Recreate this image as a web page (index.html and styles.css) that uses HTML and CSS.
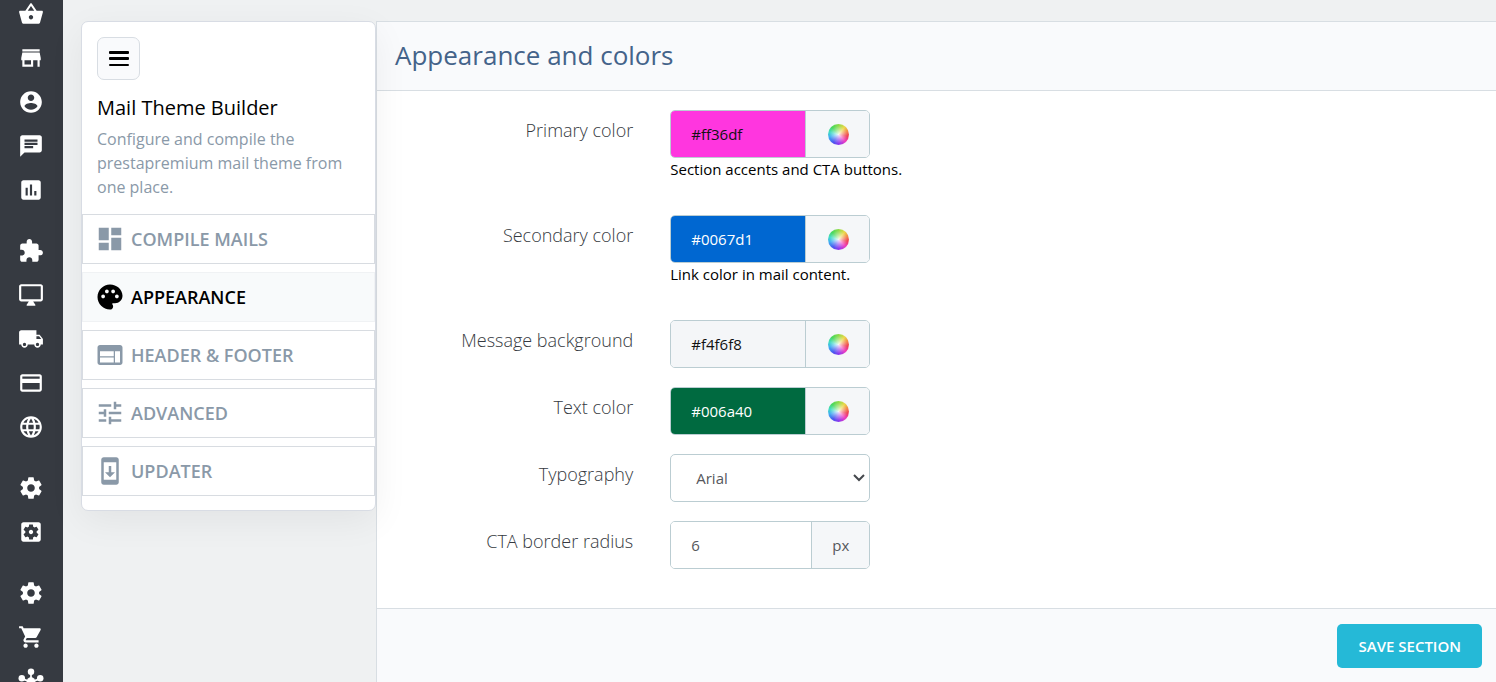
FILE: index.html
```html
<!DOCTYPE html>
<html lang="en">
<head>
<meta charset="utf-8">
<meta name="viewport" content="width=device-width, initial-scale=1">
<title>Mail Theme Builder</title>
<link rel="stylesheet" href="styles.css">
</head>
<body>
<div class="app">
  <nav class="rail" aria-label="Main">
    <div class="rail-group">
      <a href="#orders" aria-label="Orders"><svg class="rail-icon" viewBox="0 0 24 24"><path d="M17.21 9l-4.38-6.56c-.19-.28-.51-.42-.83-.42-.32 0-.64.14-.83.43L6.79 9H2c-.55 0-1 .45-1 1 0 .09.01.18.04.27l2.54 9.27c.23.84 1 1.46 1.92 1.46h13c.92 0 1.69-.62 1.93-1.46l2.54-9.27L23 10c0-.55-.45-1-1-1h-4.79zM9 9l3-4.4L15 9H9zm3 8c-1.1 0-2-.9-2-2s.9-2 2-2 2 .9 2 2-.9 2-2 2z"/></svg></a>
      <a href="#catalog" aria-label="Catalog"><svg class="rail-icon" viewBox="0 0 24 24"><path d="M20 4H4v2h16V4zm1 10v-2l-1-5H4l-1 5v2h1v6h10v-6h4v6h2v-6h1zm-9 4H6v-4h6v4z"/></svg></a>
      <a href="#customers" aria-label="Customers"><svg class="rail-icon" viewBox="0 0 24 24"><path d="M12 2C6.48 2 2 6.48 2 12s4.48 10 10 10 10-4.48 10-10S17.52 2 12 2zm0 3c1.66 0 3 1.34 3 3s-1.34 3-3 3-3-1.34-3-3 1.34-3 3-3zm0 14.200c-2.500 0-4.710-1.280-6-3.220.03-1.990 4-3.080 6-3.080 1.990 0 5.970 1.090 6 3.080-1.290 1.940-3.500 3.220-6 3.220z"/></svg></a>
      <a href="#service" aria-label="Customer service"><svg class="rail-icon" viewBox="0 0 24 24"><path d="M20 2H4c-1.1 0-1.990.9-1.990 2L2 22l4-4h14c1.1 0 2-.9 2-2V4c0-1.1-.9-2-2-2zM6 9h12v2H6V9zm8 5H6v-2h8v2zm4-6H6V6h12v2z"/></svg></a>
      <a href="#stats" aria-label="Stats"><svg class="rail-icon" viewBox="0 0 24 24"><path d="M19 3H5c-1.1 0-2 .9-2 2v14c0 1.1.9 2 2 2h14c1.1 0 2-.9 2-2V5c0-1.1-.9-2-2-2zM9 17H7v-7h2v7zm4 0h-2V7h2v10zm4 0h-2v-4h2v4z"/></svg></a>
    </div>
    <div class="rail-group">
      <a href="#modules" aria-label="Modules"><svg class="rail-icon" viewBox="0 0 24 24"><path d="M20.500 11H19V7c0-1.1-.9-2-2-2h-4V3.500C13 2.120 11.880 1 10.500 1S8 2.120 8 3.500V5H4c-1.1 0-1.990.9-1.990 2v3.800H3.500c1.490 0 2.700 1.210 2.700 2.700s-1.210 2.700-2.700 2.700H2V20c0 1.1.9 2 2 2h3.800v-1.500c0-1.490 1.210-2.700 2.700-2.700 1.490 0 2.700 1.210 2.700 2.700V22H17c1.1 0 2-.9 2-2v-4h1.500c1.380 0 2.500-1.120 2.500-2.500S21.880 11 20.500 11z"/></svg></a>
      <a href="#design" aria-label="Design"><svg class="rail-icon" viewBox="0 0 24 24"><path d="M21 2H3c-1.1 0-2 .9-2 2v12c0 1.1.9 2 2 2h7l-2 3v1h8v-1l-2-3h7c1.1 0 2-.9 2-2V4c0-1.1-.9-2-2-2zm0 14H3V4h18v12z"/></svg></a>
      <a href="#shipping" aria-label="Shipping"><svg class="rail-icon" viewBox="0 0 24 24"><path d="M20 8h-3V4H3c-1.1 0-2 .9-2 2v11h2c0 1.660 1.340 3 3 3s3-1.340 3-3h6c0 1.660 1.340 3 3 3s3-1.340 3-3h2v-5l-3-4zM6 18.500c-.83 0-1.500-.67-1.500-1.500s.67-1.500 1.500-1.500 1.500.67 1.500 1.500-.67 1.500-1.500 1.500zm13.500-9l1.960 2.500H17V9.500h2.500zm-1.500 9c-.83 0-1.500-.67-1.500-1.500s.67-1.500 1.500-1.500 1.500.67 1.500 1.500-.67 1.500-1.500 1.500z"/></svg></a>
      <a href="#payment" aria-label="Payment"><svg class="rail-icon" viewBox="0 0 24 24"><path d="M20 4H4c-1.110 0-1.990.89-1.990 2L2 18c0 1.110.89 2 2 2h16c1.110 0 2-.89 2-2V6c0-1.110-.89-2-2-2zm0 14H4v-6h16v6zm0-10H4V6h16v2z"/></svg></a>
      <a href="#international" aria-label="International"><svg class="rail-icon" viewBox="0 0 24 24"><path d="M11.990 2C6.470 2 2 6.480 2 12s4.470 10 9.990 10C17.520 22 22 17.520 22 12S17.520 2 11.990 2zm6.930 6h-2.950c-.32-1.250-.78-2.450-1.380-3.560 1.840.63 3.370 1.910 4.330 3.560zM12 4.040c.83 1.200 1.480 2.530 1.910 3.960h-3.820c.43-1.430 1.080-2.760 1.910-3.960zM4.260 14C4.100 13.360 4 12.690 4 12s.1-1.360.26-2h3.380c-.08.66-.14 1.320-.14 2 0 .68.06 1.340.14 2H4.260zm.82 2h2.950c.32 1.250.78 2.450 1.380 3.560-1.840-.63-3.370-1.900-4.330-3.560zm2.950-8H5.080c.96-1.660 2.490-2.930 4.330-3.560C8.810 5.550 8.350 6.750 8.030 8zM12 19.960c-.83-1.200-1.480-2.530-1.910-3.960h3.820c-.43 1.430-1.080 2.760-1.910 3.960zM14.340 14H9.660c-.09-.66-.16-1.320-.16-2 0-.68.07-1.350.16-2h4.680c.09.65.16 1.320.16 2 0 .68-.07 1.340-.16 2zm.25 5.560c.6-1.110 1.060-2.310 1.380-3.560h2.950c-.96 1.650-2.490 2.930-4.330 3.560zM16.360 14c.08-.66.14-1.320.14-2 0-.68-.06-1.340-.14-2h3.380c.16.64.26 1.310.26 2s-.1 1.360-.26 2h-3.380z"/></svg></a>
    </div>
    <div class="rail-group">
      <a href="#parameters" aria-label="Shop parameters"><svg class="rail-icon" viewBox="0 0 24 24"><path id="gear" d="M19.430 12.980c.04-.32.07-.64.07-.98s-.03-.66-.07-.98l2.110-1.650c.19-.15.24-.42.12-.64l-2-3.460c-.12-.22-.39-.3-.61-.22l-2.490 1c-.52-.4-1.080-.73-1.690-.98l-.38-2.650C14.460 2.180 14.250 2 14 2h-4c-.25 0-.46.18-.49.42l-.38 2.650c-.61.25-1.170.59-1.690.98l-2.490-1c-.23-.09-.49 0-.61.22l-2 3.460c-.13.22-.07.49.12.64l2.110 1.650c-.04.32-.07.65-.07.98s.03.66.07.98l-2.110 1.650c-.19.15-.24.42-.12.64l2 3.460c.12.22.39.3.61.22l2.490-1c.52.4 1.080.73 1.690.98l.38 2.650c.03.24.24.42.49.42h4c.25 0 .46-.18.49-.42l.38-2.650c.61-.25 1.170-.59 1.690-.98l2.490 1c.23.09.49 0 .61-.22l2-3.460c.12-.22.07-.49-.12-.64l-2.110-1.650zM12 15.500c-1.930 0-3.500-1.570-3.500-3.500s1.570-3.500 3.500-3.500 3.500 1.570 3.500 3.500-1.570 3.500-3.500 3.500z"/></svg></a>
      <a href="#advanced-parameters" aria-label="Advanced parameters"><svg class="rail-icon" viewBox="0 0 24 24"><path d="M12 10c-1.1 0-2 .9-2 2s.9 2 2 2 2-.9 2-2-.9-2-2-2zm7-7H5c-1.110 0-2 .9-2 2v14c0 1.1.89 2 2 2h14c1.110 0 2-.9 2-2V5c0-1.1-.89-2-2-2zm-1.750 9c0 .23-.02.46-.05.68l1.480 1.160c.13.11.17.3.08.45l-1.400 2.420c-.09.15-.27.21-.43.15l-1.740-.7c-.36.28-.76.51-1.180.69l-.26 1.850c-.03.17-.18.3-.35.3h-2.800c-.17 0-.32-.13-.35-.29l-.26-1.850c-.43-.18-.82-.41-1.180-.69l-1.740.7c-.16.06-.34 0-.43-.15l-1.400-2.420c-.09-.15-.05-.34.08-.45l1.480-1.160c-.03-.23-.05-.46-.05-.69s.02-.46.05-.68l-1.480-1.160c-.13-.11-.17-.3-.08-.45l1.400-2.420c.09-.15.27-.21.43-.15l1.740.7c.36-.28.76-.51 1.180-.69l.26-1.850c.03-.17.18-.3.35-.3h2.800c.17 0 .32.13.35.29l.26 1.850c.43.18.82.41 1.180.69l1.740-.7c.16-.06.34 0 .43.15l1.400 2.420c.09.15.05.34-.08.45l-1.480 1.160c.03.23.05.46.05.69z"/></svg></a>
    </div>
    <div class="rail-group">
      <a href="#settings" aria-label="Settings"><svg class="rail-icon" viewBox="0 0 24 24"><use href="#gear"/></svg></a>
      <a href="#cart" aria-label="Cart"><svg class="rail-icon" viewBox="0 0 24 24"><path d="M7 18c-1.1 0-1.990.9-1.990 2S5.900 22 7 22s2-.9 2-2-.9-2-2-2zM1 2v2h2l3.600 7.590-1.350 2.450c-.16.28-.25.61-.25.96 0 1.1.9 2 2 2h12v-2H7.420c-.14 0-.25-.11-.25-.25l.03-.12.9-1.630h7.450c.75 0 1.410-.41 1.750-1.030l3.580-6.490c.08-.14.12-.31.12-.48 0-.55-.45-1-1-1H5.210l-.94-2H1zm16 16c-1.1 0-1.990.9-1.990 2s.89 2 1.990 2 2-.9 2-2-.9-2-2-2z"/></svg></a>
      <a href="#hub" aria-label="Hub"><svg class="rail-icon" viewBox="0 0 24 24"><circle cx="12" cy="3.500" r="3"/><circle cx="3.500" cy="9.500" r="3"/><circle cx="20.500" cy="9.500" r="3"/><circle cx="12" cy="12.500" r="4"/><circle cx="7" cy="20.500" r="3"/><circle cx="17" cy="20.500" r="3"/><path d="M11.200 5h1.600v5h-1.600zM3.500 9l6 2-.6 1.600-6-2zM20.500 9l-6 2 .6 1.600 6-2zM7 20l3-5 1.400.8-3 5zM17 20l-3-5-1.400.8 3 5z"/></svg></a>
    </div>
  </nav>

  <main class="workspace">
    <aside class="card">
      <div class="card-head">
        <button class="menu-button" type="button" aria-label="Toggle menu"><svg class="menu-icon" viewBox="0 0 20 16"><rect y="0" width="20" height="3" rx="1"/><rect y="6" width="20" height="3" rx="1"/><rect y="13" width="20" height="2" rx="1"/></svg></button>
        <h1 class="card-title">Mail Theme Builder</h1>
        <p class="card-text">Configure and compile the prestapremium mail theme from one place.</p>
      </div>
      <nav class="tabs" aria-label="Sections">
        <a class="tab" href="#compile"><svg class="tab-icon" viewBox="0 0 24 24"><path d="M3 13h8V3H3v10zm0 8h8v-6H3v6zm10 0h8V11h-8v10zm0-18v6h8V3h-8z"/></svg>COMPILE MAILS</a>
        <a class="tab tab-active" href="#appearance" aria-current="page"><svg class="tab-icon" viewBox="0 0 24 24"><path d="M12 2C6.490 2 2 6.490 2 12s4.490 10 10 10c1.380 0 2.500-1.120 2.500-2.500 0-.61-.23-1.200-.64-1.670-.08-.1-.13-.21-.13-.33 0-.28.22-.5.5-.5H16c3.310 0 6-2.690 6-6 0-4.960-4.490-9-10-9zm5.500 11c-.83 0-1.500-.67-1.500-1.500s.67-1.500 1.500-1.500 1.500.67 1.500 1.500-.67 1.500-1.500 1.500zm-3-4c-.83 0-1.500-.67-1.500-1.500S13.670 6 14.500 6s1.500.67 1.500 1.500S15.330 9 14.500 9zM5 11.500c0-.83.67-1.500 1.500-1.500s1.500.67 1.500 1.500S7.330 13 6.500 13 5 12.330 5 11.500zm6-4c0 .83-.67 1.500-1.500 1.500S8 8.330 8 7.500 8.670 6 9.500 6s1.500.67 1.500 1.500z"/></svg>APPEARANCE</a>
        <a class="tab" href="#header-footer"><svg class="tab-icon" viewBox="0 0 24 24"><path d="M20 4H4c-1.1 0-1.990.9-1.990 2L2 18c0 1.1.9 2 2 2h16c1.1 0 2-.9 2-2V6c0-1.1-.9-2-2-2zm-5 14H4v-4h11v4zm0-5H4V9h11v4zm5 5h-4V9h4v9z"/></svg>HEADER &amp; FOOTER</a>
        <a class="tab" href="#advanced"><svg class="tab-icon" viewBox="0 0 24 24"><path d="M3 17v2h6v-2H3zM3 5v2h10V5H3zm10 16v-2h8v-2h-8v-2h-2v6h2zM7 9v2H3v2h4v2h2V9H7zm14 4v-2H11v2h10zm-6-4h2V7h4V5h-4V3h-2v6z"/></svg>ADVANCED</a>
        <a class="tab" href="#updater"><svg class="tab-icon" viewBox="0 0 24 24"><path d="M17 1.010L7 1c-1.1 0-2 .9-2 2v18c0 1.1.9 2 2 2h10c1.1 0 2-.9 2-2V3c0-1.1-.9-1.990-2-1.990zM17 19H7V5h10v14zm-1-6h-3V8h-2v5H8l4 4 4-4z"/></svg>UPDATER</a>
      </nav>
    </aside>

    <form class="panel" id="appearance">
      <header class="panel-head"><h2 class="panel-title">Appearance and colors</h2></header>
      <div class="fields">
        <div class="field">
          <label class="label" for="primary">Primary color</label>
          <div>
            <div class="group">
              <input class="input swatch-primary" id="primary" type="text" value="#ff36df">
              <button class="picker" type="button" aria-label="Pick primary color"><span class="wheel"></span></button>
            </div>
            <p class="help">Section accents and CTA buttons.</p>
          </div>
        </div>
        <div class="field">
          <label class="label" for="secondary">Secondary color</label>
          <div>
            <div class="group">
              <input class="input swatch-secondary" id="secondary" type="text" value="#0067d1">
              <button class="picker" type="button" aria-label="Pick secondary color"><span class="wheel"></span></button>
            </div>
            <p class="help">Link color in mail content.</p>
          </div>
        </div>
        <div class="field">
          <label class="label" for="background">Message background</label>
          <div class="group">
            <input class="input swatch-background" id="background" type="text" value="#f4f6f8">
            <button class="picker" type="button" aria-label="Pick message background"><span class="wheel"></span></button>
          </div>
        </div>
        <div class="field">
          <label class="label" for="text">Text color</label>
          <div class="group">
            <input class="input swatch-text" id="text" type="text" value="#006a40">
            <button class="picker" type="button" aria-label="Pick text color"><span class="wheel"></span></button>
          </div>
        </div>
        <div class="field">
          <label class="label" for="typography">Typography</label>
          <select class="select" id="typography"><option>Arial</option><option>Georgia</option><option>Verdana</option></select>
        </div>
        <div class="field">
          <label class="label" for="radius">CTA border radius</label>
          <div class="group">
            <input class="input" id="radius" type="text" inputmode="numeric" value="6">
            <span class="unit">px</span>
          </div>
        </div>
      </div>
      <footer class="panel-foot"><button class="save" type="submit">SAVE SECTION</button></footer>
    </form>
  </main>
</div>
</body>
</html>
```

FILE: styles.css
```css
* {
  box-sizing: border-box;
}

body {
  margin: 0;
  background: #eff1f2;
  color: #363a41;
  font-family: "Open Sans", "Noto Sans", sans-serif;
}

h1, h2, p {
  margin: 0;
  font-weight: 400;
}

button, input, select {
  margin: 0;
  font-family: inherit;
}

.app {
  display: flex;
  height: 100vh;
  overflow: hidden;
}

/* Icon rail */
.rail {
  display: flex;
  flex: none;
  flex-direction: column;
  gap: 35px;
  width: 63px;
  padding: 1px 1px 0 0;
  overflow: hidden;
  background: #363a41;
}

.rail-group {
  display: flex;
  flex-direction: column;
  align-items: center;
  gap: 18px;
}

.rail-group a {
  display: block;
  height: 26px;
}

.rail-icon {
  display: block;
  width: 26px;
  height: 26px;
  fill: #fff;
}

/* Section navigation card */
.workspace {
  display: flex;
  flex: 1;
  min-width: 0;
  padding: 21px 0 0 18px;
}

.card {
  position: relative;
  z-index: 1;
  flex: none;
  align-self: flex-start;
  width: 295px;
  padding-bottom: 14px;
  border: 1px solid #d8dce4;
  border-radius: 7px;
  background: #fff;
  box-shadow: 0 10px 36px rgba(0, 0, 0, 0.06);
}

.card-head {
  padding: 15px;
}

.menu-button {
  display: grid;
  place-items: center;
  width: 43px;
  height: 43px;
  padding: 0;
  border: 1px solid #d8dde3;
  border-radius: 7px;
  background: #f9fafc;
}

.menu-icon {
  width: 20px;
  height: 16px;
  fill: #000;
}

.card-title {
  margin: 13px 0 4px;
  color: #000;
  font-size: 20px;
  line-height: 30px;
}

.card-text {
  color: #8a99a8;
  font-size: 16px;
  line-height: 24px;
}

.tabs {
  display: flex;
  flex-direction: column;
  gap: 8px;
}

.tab {
  display: flex;
  align-items: center;
  gap: 6px;
  height: 50px;
  padding: 0 12px;
  border: 1px solid #d8dce1;
  color: #8a99a8;
  font-size: 18px;
  font-weight: 600;
  text-decoration: none;
}

.tab-active {
  border-color: #f0f2f4;
  background: #f8fafb;
  color: #000;
}

.tab-icon {
  flex: none;
  width: 30px;
  height: 30px;
  fill: currentColor;
}

/* Form panel */
.panel {
  display: flex;
  flex: 1;
  flex-direction: column;
  min-width: 0;
  border: solid #d8dee3;
  border-width: 1px 0 0 1px;
  background: #fff;
}

.panel-head {
  padding: 16px 18px 17px;
  border-bottom: 1px solid #d8dee3;
  background: #f9fafc;
}

.panel-title {
  color: #44638a;
  font-size: 26px;
  line-height: 35px;
}

.fields {
  display: grid;
  gap: 19px;
  padding: 19px 18px 39px;
}

.field {
  display: grid;
  grid-template-columns: 22% minmax(0, 1fr);
  column-gap: 37px;
}

.label {
  padding-top: 8px;
  color: #363a41;
  font-size: 18px;
  font-weight: 350;
  line-height: 24px;
  text-align: right;
}

.group, .select {
  width: 200px;
  height: 48px;
  border: 1px solid #bbcdd2;
  border-radius: 5px;
}

.group {
  display: flex;
  overflow: hidden;
}

.input {
  flex: 1;
  min-width: 0;
  padding: 0 20px;
  border: 0;
  background: #fff;
  color: #56585c;
  font-size: 15px;
}

.swatch-primary {
  background: #ff36df;
  color: #111;
}

.swatch-secondary {
  background: #0067d1;
  color: #fff;
}

.swatch-background {
  background: #f4f6f8;
  color: #111;
}

.swatch-text {
  background: #006a40;
  color: #fff;
}

.picker, .unit {
  display: grid;
  flex: none;
  place-items: center;
  border: 0;
  border-left: 1px solid #bbcdd2;
  background: #f5f7f9;
}

.picker {
  width: 64px;
  padding: 0 0 0 2px;
}

.unit {
  width: 58px;
  color: #56585c;
  font-size: 15px;
}

.wheel {
  width: 21px;
  height: 21px;
  border-radius: 50%;
  background:
    radial-gradient(circle, rgba(255, 255, 255, 0.9) 0, rgba(255, 255, 255, 0.4) 32%, rgba(255, 255, 255, 0) 60%),
    conic-gradient(#8edb4a, #ecd84a 40deg, #f28a4a 70deg, #ee4058 100deg, #ee3fc0 135deg, #9438ee 175deg, #4a58f0 215deg, #40aef2 255deg, #42dcc4 285deg, #4ad85a 320deg, #8edb4a);
}

.select {
  padding: 0 25px;
  appearance: none;
  background: #fff url("data:image/svg+xml,%3Csvg xmlns='http://www.w3.org/2000/svg' width='12' height='8'%3E%3Cpath d='M1 1l5 5 5-5' fill='none' stroke='%2345484d' stroke-width='2'/%3E%3C/svg%3E") no-repeat right 4px center;
  color: #56585c;
  font-size: 15px;
}

.help {
  padding-bottom: 15px;
  color: #000;
  font-size: 15px;
  line-height: 23px;
}

.panel-foot {
  display: flex;
  flex: 1;
  align-items: flex-start;
  justify-content: flex-end;
  padding: 15px 14px;
  border-top: 1px solid #d8dee3;
  background: #f9fafc;
}

.save {
  height: 44px;
  padding: 0 21px;
  border: 0;
  border-radius: 5px;
  background: #25b9d7;
  color: #fff;
  font-size: 15px;
  font-weight: 600;
}
```
